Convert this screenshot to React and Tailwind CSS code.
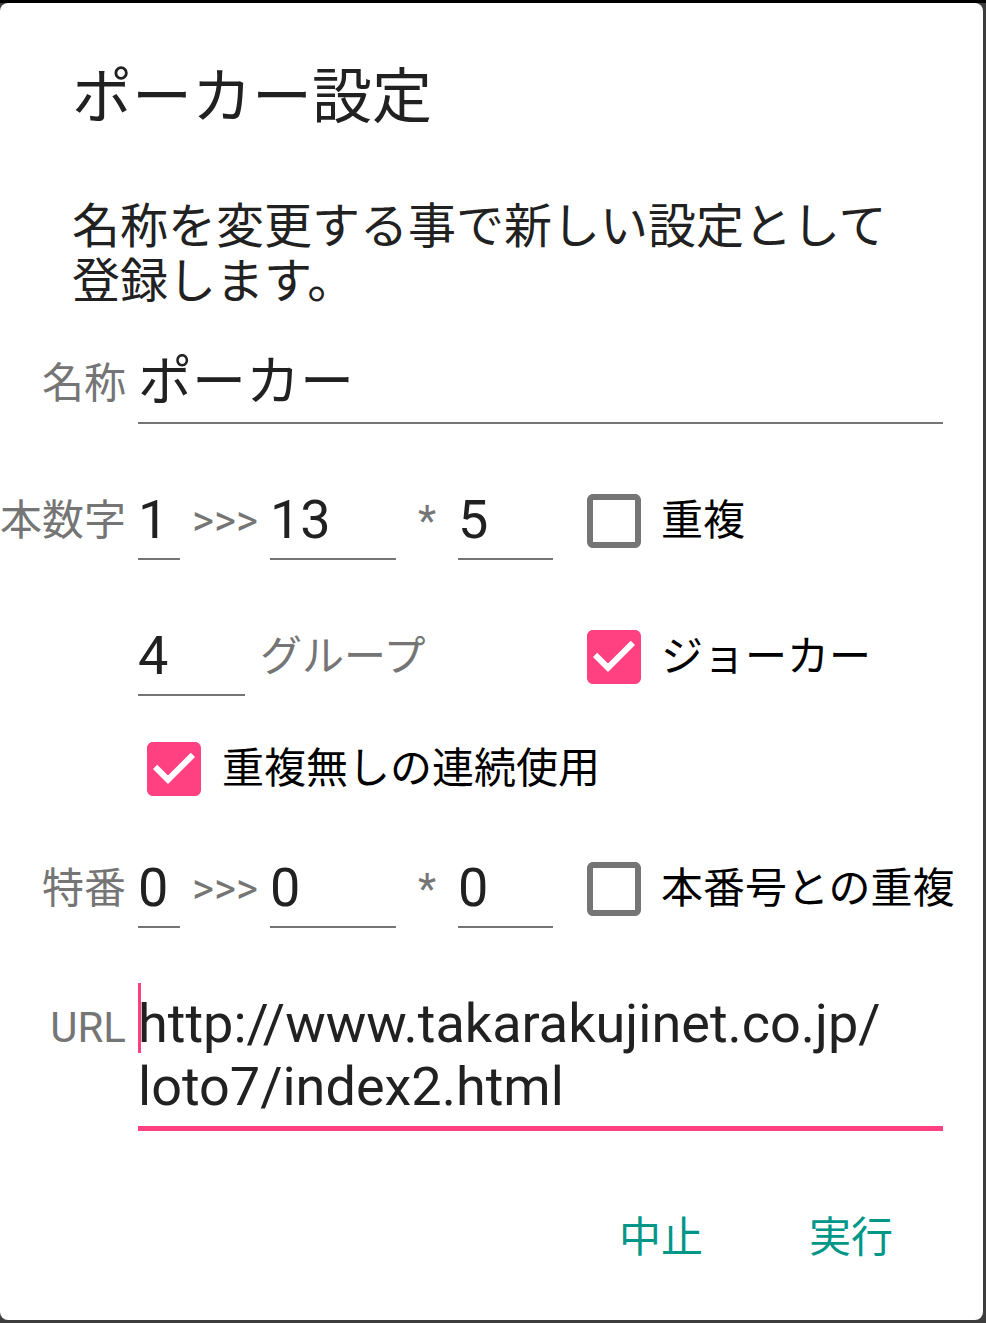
import React from "react";

const BOX_EMPTY =
  "M19 5v14H5V5h14m0-2H5c-1.1 0-2 .9-2 2v14c0 1.1.9 2 2 2h14c1.1 0 2-.9 2-2V5c0-1.1-.9-2-2-2z";
const BOX_CHECKED =
  "M19 3H5c-1.11 0-2 .9-2 2v14c0 1.1.89 2 2 2h14c1.11 0 2-.9 2-2V5c0-1.1-.89-2-2-2zm-9 14l-5-5 1.41-1.41L10 14.17l7.59-7.59L19 8l-9 9z";

function Checkbox({ checked, className = "" }) {
  return (
    <svg
      viewBox="3 3 18 18"
      className={`w-[54px] h-[54px] shrink-0 ${className}`}
    >
      <path d={checked ? BOX_CHECKED : BOX_EMPTY} fill={checked ? "#FF4081" : "#757575"} />
    </svg>
  );
}

function Field({ className = "", children }) {
  return (
    <div
      className={`h-[78px] flex items-center border-b-2 border-[#757575] text-[54px] leading-none text-[#212121] ${className}`}
    >
      {children}
    </div>
  );
}

function Label({ children }) {
  return (
    <span className="w-[126px] shrink-0 text-right text-[42px] leading-none text-[#757575]">
      {children}
    </span>
  );
}

function NumberRow({ label, from, to, times, option, className = "" }) {
  return (
    <div className={`flex items-center ${className}`}>
      <Label>{label}</Label>
      <Field className="ml-[12px] w-[42px]">{from}</Field>
      <span className="w-[90px] text-center text-[42px] leading-none text-[#757575]">&gt;&gt;&gt;</span>
      <Field className="w-[126px]">{to}</Field>
      <span className="w-[62px] text-center text-[42px] leading-none text-[#757575]">*</span>
      <Field className="w-[95px]">{times}</Field>
      <Checkbox className="ml-[34px]" />
      <span className="ml-[20px] text-[42px] leading-none text-black">{option}</span>
    </div>
  );
}

export default function App() {
  return (
    <div className="w-[986px] h-[1323px] bg-[#3d3d3d] flex flex-col font-[Roboto,'Noto_Sans_CJK_JP',sans-serif]">
      <div className="h-[3px] bg-black" />
      <div className="w-[983px] h-[1317px] bg-white rounded-[8px] pt-[65px]">
        {/* title */}
        <h1 className="pl-[72px] text-[60px] leading-[60px] text-[#212121]">ポーカー設定</h1>

        {/* message */}
        <p className="mt-[71px] pl-[72px] text-[48px] leading-[55px] text-[#212121]">
          名称を変更する事で新しい設定として
          <br />
          登録します。
        </p>

        {/* name */}
        <div className="flex items-center mt-[34px]">
          <Label>名称</Label>
          <div className="ml-[12px] w-[805px] h-[81px] flex items-center border-b-2 border-[#757575] text-[54px] leading-none text-[#212121]">
            ポーカー
          </div>
        </div>

        <NumberRow className="mt-[58px]" label="本数字" from="1" to="13" times="5" option="重複" />

        {/* groups + joker */}
        <div className="flex items-center mt-[58px] pl-[138px]">
          <div className="w-[449px] flex items-center">
            <Field className="w-[107px]">4</Field>
            <span className="ml-[15px] text-[42px] leading-none text-[#757575]">グループ</span>
          </div>
          <Checkbox checked />
          <span className="ml-[20px] text-[42px] leading-none text-black">ジョーカー</span>
        </div>

        {/* consecutive */}
        <div className="flex items-center h-[78px] mt-[34px] pl-[147px]">
          <Checkbox checked />
          <span className="ml-[21px] text-[42px] leading-none text-black">重複無しの連続使用</span>
        </div>

        <NumberRow className="mt-[42px]" label="特番" from="0" to="0" times="0" option="本番号との重複" />

        {/* url */}
        <div className="flex items-baseline mt-[57px]">
          <Label>URL</Label>
          <div className="relative ml-[12px] w-[805px] pt-[7px] pb-[8px] border-b-[5px] border-[#FF4081] text-[54px] leading-[63px] text-[#212121]">
            <span className="absolute left-0 top-[-2px] w-[3px] h-[70px] bg-[#FF4081]" />
            <span>http://www.takarakujinet.co.jp/</span>
            <br />
            <span>loto7/index2.html</span>
          </div>
        </div>

        {/* actions */}
        <div className="flex justify-end gap-[106px] mt-[86px] pr-[90px] text-[42px] leading-none text-[#009688]">
          <button>中止</button>
          <button>実行</button>
        </div>
      </div>
    </div>
  );
}
